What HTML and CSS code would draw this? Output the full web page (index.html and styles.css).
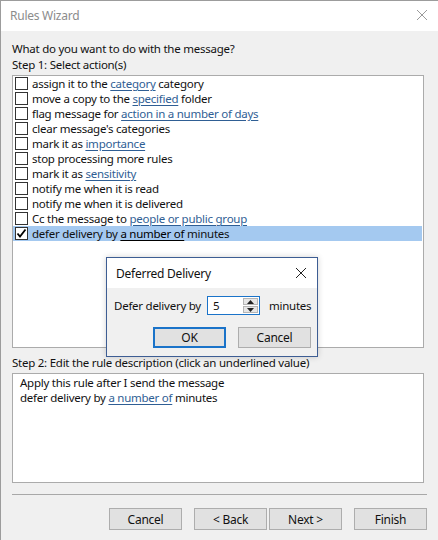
FILE: index.html
```html
<!DOCTYPE html>
<html lang="en">
<head>
<meta charset="utf-8">
<title>Rules Wizard</title>
<link rel="stylesheet" href="styles.css">
</head>
<body>
<div class="window">
  <div class="titlebar">
    <span class="title">Rules Wizard</span>
    <svg class="close" width="12" height="12" viewBox="0 0 12 12"><path d="M1 1L11 11M11 1L1 11" stroke="#9a9a9a" stroke-width="1"/></svg>
  </div>
  <div class="content">
    <p class="label first">What do you want to do with the message?</p>
    <p class="label">Step 1: Select action(s)</p>
    <ul class="list">
      <li class="row"><span class="check"></span><span>assign it to the <span class="link">category</span> category</span></li>
      <li class="row"><span class="check"></span><span>move a copy to the <span class="link">specified</span> folder</span></li>
      <li class="row"><span class="check"></span><span>flag message for <span class="link">action in a number of days</span></span></li>
      <li class="row"><span class="check"></span><span>clear message's categories</span></li>
      <li class="row"><span class="check"></span><span>mark it as <span class="link">importance</span></span></li>
      <li class="row"><span class="check"></span><span>stop processing more rules</span></li>
      <li class="row"><span class="check"></span><span>mark it as <span class="link">sensitivity</span></span></li>
      <li class="row"><span class="check"></span><span>notify me when it is read</span></li>
      <li class="row"><span class="check"></span><span>notify me when it is delivered</span></li>
      <li class="row"><span class="check"></span><span>Cc the message to <span class="link">people or public group</span></span></li>
      <li class="row selected"><span class="check checked"><svg width="11" height="11" viewBox="0 0 11 11"><path d="M1.5 5.5L4 8.5L9.5 1.5" fill="none" stroke="#000" stroke-width="1.8"/></svg></span><span>defer delivery by <span class="link">a number of</span> minutes</span></li>
    </ul>
    <p class="label step2">Step 2: Edit the rule description (click an underlined value)</p>
    <div class="desc">
      <div>Apply this rule after I send the message</div>
      <div>defer delivery by <span class="link">a number of</span> minutes</div>
    </div>
    <div class="sep"></div>
    <div class="buttons">
      <button class="btn">Cancel</button>
      <div class="pair">
        <button class="btn">&lt; Back</button>
        <button class="btn">Next &gt;</button>
      </div>
      <button class="btn">Finish</button>
    </div>
  </div>

  <div class="dialog">
    <div class="dlg-title">
      <span>Deferred Delivery</span>
      <svg class="dlg-close" width="12" height="12" viewBox="0 0 12 12"><path d="M1 1L11 11M11 1L1 11" stroke="#222" stroke-width="1"/></svg>
    </div>
    <div class="dlg-body">
      <div class="dlg-field">
        <span class="dlg-label">Defer delivery by</span>
        <div class="spin">
          <span class="spin-value">5</span>
          <div class="spin-btns">
            <span class="spin-btn"><svg width="7" height="4" viewBox="0 0 7 4"><path d="M0 4L3.5 0L7 4Z" fill="#222"/></svg></span>
            <span class="spin-btn"><svg width="7" height="4" viewBox="0 0 7 4"><path d="M0 0L7 0L3.5 4Z" fill="#222"/></svg></span>
          </div>
        </div>
        <span class="dlg-label">minutes</span>
      </div>
      <div class="dlg-buttons">
        <button class="btn default">OK</button>
        <button class="btn">Cancel</button>
      </div>
    </div>
  </div>
</div>
</body>
</html>
```

FILE: styles.css
```css
* { box-sizing: border-box; }

html, body {
  margin: 0;
  padding: 0;
}

body {
  width: 438px;
  height: 540px;
  overflow: hidden;
  font-family: "Noto Sans", "Segoe UI", sans-serif;
  font-size: 11.5px;
  letter-spacing: -0.25px;
  color: #111;
}

.window {
  position: relative;
  width: 438px;
  height: 540px;
  background: #f0f0f0;
  border-left: 1px solid #9c9c9c;
  border-top: 1px solid #9c9c9c;
}

.titlebar {
  height: 30px;
  background: #fff;
  display: flex;
  align-items: center;
  justify-content: space-between;
  padding: 0 10px 0 9px;
}

.title {
  color: #8c8c8c;
  font-size: 12px;
  margin-top: -2px;
}

.close { margin-top: -2px; }

.content {
  padding: 0 10px 0 11px;
}

.label {
  margin: 0;
  line-height: 16px;
  height: 16px;
  white-space: nowrap;
}

.label.first { margin-top: 10px; }

.list {
  list-style: none;
  margin: 2px 0 0 0;
  padding: 0;
  width: 412px;
  height: 273px;
  background: #fff;
  border: 1px solid #ababab;
}

.row {
  display: flex;
  align-items: center;
  height: 15px;
  line-height: 15px;
  margin-right: 1px;
  padding-left: 2px;
  white-space: nowrap;
}

.row.selected { background: #a4c9f0; }
.row.selected .link { color: #000; text-decoration-color: #000; }

.check {
  width: 13px;
  height: 13px;
  flex: none;
  border: 1px solid #333;
  background: #fff;
  margin-right: 4px;
  display: flex;
  align-items: center;
  justify-content: center;
}

.link {
  color: #2f5e94;
  text-decoration: underline;
  text-underline-offset: 2px;
}

.step2 { margin-top: 7px; }

.desc {
  margin-top: 2px;
  width: 412px;
  height: 110px;
  background: #fff;
  border: 1px solid #ababab;
  padding: 1px 7px;
  line-height: 15px;
}

.sep {
  margin-top: 11px;
  width: 415px;
  height: 1px;
  background: #a8a8a8;
}

.buttons {
  display: flex;
  justify-content: flex-end;
  gap: 12px;
  margin-top: 13px;
  width: 415px;
}

.pair { display: flex; gap: 2px; }

.btn {
  width: 73px;
  height: 22px;
  padding: 0;
  font-family: inherit;
  font-size: 12px;
  letter-spacing: -0.25px;
  color: #111;
  background: #e1e1e1;
  border: 1px solid #adadad;
}

/* Deferred Delivery dialog floating over the wizard */
.dialog {
  position: absolute;
  left: 105px;
  top: 256px;
  width: 212px;
  height: 100px;
  background: #f0f0f0;
  border: 1px solid #3d5d93;
  box-shadow: 0 0 6px rgba(0, 0, 0, 0.18);
}

.dlg-title {
  height: 30px;
  background: #fff;
  display: flex;
  align-items: center;
  justify-content: space-between;
  padding: 0 10px 0 9px;
  font-size: 12px;
  white-space: nowrap;
}

.dlg-body {
  padding: 8px 0 0 7px;
}

.dlg-field {
  display: flex;
  align-items: center;
  height: 19px;
  white-space: nowrap;
}

.dlg-label { line-height: 16px; }

.spin {
  margin-left: 6px;
  margin-right: 9px;
  width: 53px;
  height: 19px;
  flex: none;
  background: #fff;
  border: 1px solid #1a73c9;
  display: flex;
  align-items: center;
  justify-content: space-between;
  padding: 1px 1px 1px 5px;
}

.spin-btns {
  display: flex;
  flex-direction: column;
  width: 15px;
  height: 15px;
  gap: 1px;
}

.spin-btn {
  flex: 1;
  background: #e6e6e6;
  border: 1px solid #b5b5b5;
  display: flex;
  align-items: center;
  justify-content: center;
}

.dlg-buttons {
  display: flex;
  gap: 12px;
  margin-top: 12px;
  padding-left: 39px;
}

.dlg-buttons .btn { height: 21px; width: 73px; }

.btn.default {
  border: 1px solid #1a73c9;
  box-shadow: inset 0 0 0 1px #1a73c9;
}
```
